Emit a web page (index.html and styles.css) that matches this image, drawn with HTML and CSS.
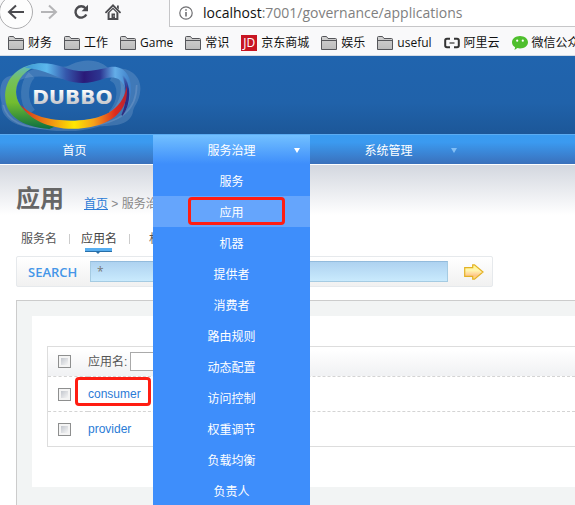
FILE: index.html
```html
<!DOCTYPE html>
<html lang="zh-CN">
<head>
<meta charset="utf-8">
<title>Dubbo 应用</title>
<link rel="stylesheet" href="styles.css">
</head>
<body>
<svg class="defs" width="0" height="0" aria-hidden="true">
  <linearGradient id="folder-fill" x1="0" y1="0" x2="0" y2="1"><stop offset="0" stop-color="#d2d2d2"/><stop offset="1" stop-color="#bcbcbc"/></linearGradient>
  <symbol id="folder" viewBox="0 0 16 14">
    <path d="M.5 13.500V1.500Q.5 .5 1.500 .5H5.500L7 2.500H14.500Q15.500 2.500 15.500 3.500V13.500Z" fill="url(#folder-fill)" stroke="#55565a"/>
    <path d="M1 4.500H15" stroke="#55565a"/>
  </symbol>
</svg>

<div class="browser">
  <div class="toolbar">
    <button class="back" aria-label="后退"><svg width="18" height="16" viewBox="0 0 18 16"><path d="M9 1.500 2 8l7 6.500M2 8h15" fill="none" stroke="#4b4b4f" stroke-width="2"/></svg></button>
    <button class="tool" aria-label="前进"><svg width="18" height="16" viewBox="0 0 18 16"><path d="M9 1.500 16 8l-7 6.500M16 8H1" fill="none" stroke="#b5b5b7" stroke-width="2"/></svg></button>
    <button class="tool" aria-label="刷新"><svg width="16" height="16" viewBox="0 0 16 16"><path d="M12.500 4.200A5.700 5.700 0 1 0 13.300 10.500" fill="none" stroke="#4b4b4f" stroke-width="2.400"/><path d="M15 .8V7.200H8.600Z" fill="#4b4b4f"/></svg></button>
    <button class="tool home" aria-label="主页"><svg width="16" height="16" viewBox="0 0 16 16"><path d="M1 8.300 8 1.300l7 7" fill="none" stroke="#4b4b4f" stroke-width="1.800" stroke-linecap="round"/><path d="M12 1.500h1.800v4L12 3.700ZM2.600 8.800 8 3.500l5.400 5.300V16H2.600Z" fill="#4b4b4f"/><path d="M4.600 8.500 8 5.200l3.400 3.300V14H10V9.500H6.500V14H4.600Z" fill="#f9f9fa"/><path d="M8.400 11.500h1v1h-1Z" fill="#f9f9fa"/></svg></button>
    <div class="address">
      <svg width="14" height="14" viewBox="0 0 14 14"><circle cx="7" cy="7" r="6.200" fill="none" stroke="#6f6f72" stroke-width="1.200"/><path d="M7 6v4.500M7 3.200v1.500" stroke="#6f6f72" stroke-width="1.600"/></svg>
      <span><b>localhost</b>:7001/governance/applications</span>
    </div>
  </div>
  <nav class="bookmarks" aria-label="书签">
    <a href="#"><svg width="16" height="14"><use href="#folder"/></svg>财务</a>
    <a href="#"><svg width="16" height="14"><use href="#folder"/></svg>工作</a>
    <a href="#"><svg width="16" height="14"><use href="#folder"/></svg>Game</a>
    <a href="#"><svg width="16" height="14"><use href="#folder"/></svg>常识</a>
    <a href="#"><span class="jd">JD</span>京东商城</a>
    <a href="#"><svg width="16" height="14"><use href="#folder"/></svg>娱乐</a>
    <a href="#"><svg width="16" height="14"><use href="#folder"/></svg>useful</a>
    <a href="#"><svg width="16" height="12" viewBox="0 0 16 12"><path d="M6 1.800H3Q1.200 1.800 1.200 3.500v5Q1.200 10.200 3 10.200h3M10 1.800h3q1.800 0 1.800 1.700v5q0 1.700-1.800 1.700h-3" fill="none" stroke="#333" stroke-width="2"/><path d="M5.500 6h5" stroke="#333" stroke-width="1.200"/></svg>阿里云</a>
    <a href="#"><svg width="16" height="14" viewBox="0 0 16 14"><path d="M8 0c4.500 0 8 2.800 8 6.300s-3.500 6.200-8 6.200q-1.400 0-2.600-.4L2.500 14l.6-2.700C1.200 10.200 0 8.400 0 6.300 0 2.800 3.500 0 8 0Z" fill="#4fbf2d"/><circle cx="5.200" cy="4.700" r="1.100" fill="#fff"/><circle cx="10.800" cy="4.700" r="1.100" fill="#fff"/></svg>微信公众</a>
  </nav>
</div>

<header class="banner">
  <svg class="logo" width="145" height="75" viewBox="0 3 435 225" role="img" aria-label="DUBBO">
    <defs>
      <linearGradient id="g-top" x1="70" y1="0" x2="390" y2="0" gradientUnits="userSpaceOnUse"><stop offset="0" stop-color="#3a96cf"/><stop offset=".22" stop-color="#5cb8ed"/><stop offset=".4" stop-color="#3558ac"/><stop offset=".57" stop-color="#2a1a78"/><stop offset=".72" stop-color="#2c3591"/><stop offset=".86" stop-color="#64aee8"/><stop offset="1" stop-color="#3f80c9"/></linearGradient>
      <linearGradient id="g-edge" x1="0" y1="60" x2="0" y2="180" gradientUnits="userSpaceOnUse"><stop offset="0" stop-color="#2a2a86" stop-opacity="0"/><stop offset=".4" stop-color="#2a2a86"/><stop offset="1" stop-color="#2f2d80"/></linearGradient>
      <linearGradient id="g-left" x1="0" y1="25" x2="0" y2="220" gradientUnits="userSpaceOnUse"><stop offset="0" stop-color="#5db7cf"/><stop offset=".25" stop-color="#75c15c"/><stop offset=".6" stop-color="#73bd2f"/><stop offset="1" stop-color="#0e7141"/></linearGradient>
      <linearGradient id="g-bottom" x1="60" y1="0" x2="385" y2="0" gradientUnits="userSpaceOnUse"><stop offset="0" stop-color="#cf2d16"/><stop offset=".25" stop-color="#ee8416"/><stop offset=".5" stop-color="#fee800"/><stop offset=".68" stop-color="#f5a21a"/><stop offset=".88" stop-color="#dd2b1e"/><stop offset="1" stop-color="#b32134"/></linearGradient>
      <linearGradient id="g-word" x1="0" y1="0" x2="0" y2="1"><stop offset=".2" stop-color="#fff"/><stop offset=".8" stop-color="#c4c6cb"/></linearGradient>
    </defs>
    <path d="M5 85C20 50 50 70 80 52C135 20 185 48 215 28C265 5 310 20 330 45C380 28 425 60 421 105C418 145 400 150 398 175C385 215 335 212 300 214C225 238 155 228 105 220C35 215 0 180 5 145C-2 115 0 100 5 85ZM60 75C35 115 55 155 88 178C160 204 270 203 325 175C360 150 372 100 355 66C320 50 295 80 245 78C180 74 120 52 60 75Z" fill="#a8c2df" fill-opacity=".24" fill-rule="evenodd"/>
    <path d="M95 60C72 85 65 135 95 172M335 66C375 85 365 145 335 178" fill="none" stroke="#a8cae0" stroke-width="24" stroke-opacity=".2"/>
    <path d="M410 90C410 160 370 205 250 215M10 150C20 200 75 220 145 220" fill="none" stroke="#a8bddd" stroke-width="5" stroke-opacity=".25"/>
    <path d="M128 25C60 25 10 70 16 132C20 180 60 215 148 222L175 210C105 207 48 160 48 110C48 75 75 43 128 25Z" fill="url(#g-left)"/>
    <path d="M75 38C110 18 150 24 190 36C240 58 290 46 330 36C370 30 394 60 393 103C392 140 381 165 366 181C382 145 381 115 373 94C360 65 338 65 316 70C270 87 235 88 198 76C150 56 120 42 75 38Z" fill="url(#g-top)"/>
    <path d="M368 60C392 90 392 145 366 181C382 145 384 105 368 60Z" fill="url(#g-edge)" stroke="url(#g-edge)" stroke-width="4"/>
    <path d="M62 150C105 190 160 197 225 197C300 195 368 170 380 94C389 170 330 215 235 221C155 226 88 195 62 150Z" fill="url(#g-bottom)"/>
    <text x="217" y="147" class="wordmark" text-anchor="middle" fill="url(#g-word)">DUBBO</text>
  </svg>
</header>

<nav class="mainnav" aria-label="主导航">
  <ul>
    <li class="first"><a href="#">首页</a></li>
    <li class="open"><a href="#">服务治理</a><span class="caret"></span>
      <ul class="menu">
        <li><a href="#">服务</a></li>
        <li class="current"><a href="#">应用</a><span class="mark mark-menu"></span></li>
        <li><a href="#">机器</a></li>
        <li><a href="#">提供者</a></li>
        <li><a href="#">消费者</a></li>
        <li><a href="#">路由规则</a></li>
        <li><a href="#">动态配置</a></li>
        <li><a href="#">访问控制</a></li>
        <li><a href="#">权重调节</a></li>
        <li><a href="#">负载均衡</a></li>
        <li><a href="#">负责人</a></li>
      </ul>
    </li>
    <li><a href="#">系统管理</a><span class="caret dim"></span></li>
  </ul>
</nav>

<main>
  <div class="heading">
    <h1>应用</h1>
    <div class="crumbs"><a href="#">首页</a> &gt; 服务治理 &gt; 应用</div>
  </div>
  <div class="tabs">
    <a href="#">服务名</a><i></i><a href="#" class="selected">应用名</a><i></i><a href="#" class="machine">机器名</a>
  </div>
  <form class="search">
    <label for="keyword">SEARCH</label>
    <input id="keyword" type="text" value="*">
    <button type="button" aria-label="搜索"><svg width="20" height="16" viewBox="0 0 20 16"><defs><linearGradient id="g-arrow" x1="0" y1="0" x2="0" y2="1"><stop offset="0" stop-color="#fff68e"/><stop offset=".4" stop-color="#fff5b0"/><stop offset=".75" stop-color="#ffc78c"/><stop offset="1" stop-color="#ffe070"/></linearGradient></defs><path d="M.7 3.700H8.700V.9H10.500L19 8l-8.500 7.100H8.700V12.300H.7Z" fill="url(#g-arrow)" stroke="#e3b224" stroke-width="1.200"/></svg></button>
  </form>
  <section class="panel">
    <div class="sheet">
      <table>
        <thead>
          <tr><th class="pick"><input type="checkbox" aria-label="全选"></th><th><div class="filter"><label for="appname">应用名:</label><input id="appname" type="text"></div></th></tr>
        </thead>
        <tbody>
          <tr><td class="pick"><input type="checkbox" aria-label="consumer"></td><td><span class="marked"><a href="#">consumer</a><span class="mark mark-row"></span></span></td></tr>
          <tr><td class="pick"><input type="checkbox" aria-label="provider"></td><td><a href="#">provider</a></td></tr>
        </tbody>
      </table>
    </div>
  </section>
</main>
</body>
</html>
```
FILE: styles.css
```css
* { box-sizing: border-box; }
html { height: 100%; overflow: hidden; }
body {
  margin: 0;
  min-height: 100%;
  background: #fff;
  color: #555;
  font: 12px/18px "Liberation Sans", "Noto Sans CJK SC", sans-serif;
}
a { color: inherit; text-decoration: none; }
ul { margin: 0; padding: 0; list-style: none; }
button { padding: 0; border: 0; background: none; display: flex; align-items: center; justify-content: center; }
svg { display: block; flex: none; }
.defs { position: absolute; }

/* browser chrome */
.browser {
  height: 56px;
  background: #f9f9fa;
  border-bottom: 1px solid #d5dce5;
  overflow: hidden;
  font-family: "Open Sans", "Noto Sans CJK SC", sans-serif;
  color: #111;
}
.toolbar { display: flex; align-items: center; height: 27px; }
.back {
  flex: none;
  width: 34px;
  height: 34px;
  margin-left: -1px;
  border: 1px solid #adadaf;
  border-radius: 50%;
  background: #fdfdfd;
}
.toolbar .back, .toolbar .tool { margin-top: -3px; }
.tool { flex: none; width: 32px; height: 32px; }
.home { margin-right: 40px; }
.address {
  flex: 1;
  display: flex;
  align-items: center;
  gap: 10px;
  height: 27px;
  padding: 0 9px;
  border: 1px solid #c6c6c8;
  border-top: 0;
  background: #fff;
  color: #808080;
  font-size: 14px;
  white-space: nowrap;
  margin-right: -4px;
}
.address b { color: #111; font-weight: 400; }
.bookmarks { display: flex; gap: 12px; padding: 7px 8px; white-space: nowrap; }
.bookmarks a { display: flex; flex: none; align-items: center; gap: 4px; }
.jd {
  width: 16px;
  height: 16px;
  background: #c81623;
  color: #fff;
  font: 12px/16px "Open Sans", sans-serif;
  text-align: center;
}

/* banner */
.banner { height: 78px; background: linear-gradient(#2064ae, #2062aa 60%, #1c5798); }
.wordmark { font: 700 60px "DejaVu Sans", sans-serif; }

/* navigation */
.mainnav { height: 31px; border-top: 1px solid #5bacf2; border-bottom: 1px solid #fff; background: linear-gradient(#3a9cf0, #3b9af0 25%, #3a70bb); }
.mainnav > ul { display: flex; height: 29px; }
.mainnav > ul > li {
  position: relative;
  width: 157px;
  color: #fff;
  text-align: center;
  line-height: 32px;
}
.mainnav > ul > .first { width: 153px; padding-right: 4px; }
.mainnav > ul > .open { background: linear-gradient(#72c0ff, #3e8efb); }
.caret {
  position: absolute;
  right: 10px;
  top: 13px;
  border: 3px solid transparent;
  border-top: 5px solid #fff;
  border-bottom: 0;
}
.caret.dim { border-top-color: #83bff5; }
.menu { position: absolute; z-index: 2; left: 0; right: 0; top: 29px; padding-top: 1px; background: #3e8efb; }
.menu li { position: relative; height: 31px; line-height: 34px; }
.menu .current { background: #65a5fc; }

.mark { position: absolute; border: 3px solid #ff1d12; border-radius: 4px; }
.mark-menu { left: 35px; right: 25px; top: 1px; bottom: 2px; }
.marked { position: relative; display: inline-block; }
.mark-row { left: -13px; right: -10px; top: -8px; bottom: -3px; }

/* page */
main { padding: 16px 0 0 16px; background: linear-gradient(#d3d7df, #fff 50px); }
.heading { display: flex; align-items: flex-end; gap: 20px; height: 36px; }
h1 { margin: 0; color: #666; font-size: 24px; line-height: 36px; }
.crumbs { color: #888; line-height: 24px; padding-bottom: 1px; }
.crumbs a { color: #2a7bd6; text-decoration: underline; }
.tabs { display: flex; align-items: center; gap: 12px; height: 39px; padding: 4px 5px 0; }
.tabs i { width: 1px; height: 10px; margin-right: -1px; background: #ccc; }
.tabs .machine { margin-left: 8px; }
.selected { position: relative; color: #444; }
.selected::before {
  content: "";
  position: absolute;
  left: 4px;
  right: 5px;
  bottom: -4px;
  height: 3px;
  background: #57aef0;
  border-bottom: 1px solid #286fa8;
}
.selected::after {
  content: "";
  position: absolute;
  left: 15px;
  bottom: -6px;
  border: 2px solid transparent;
  border-top-color: #286fa8;
  border-bottom: 0;
}
.search {
  display: flex;
  align-items: center;
  width: 477px;
  height: 31px;
  padding-left: 11px;
  border: 1px solid #e6e9ec;
  border-radius: 2px;
  background: linear-gradient(#fff, #f1f1f1);
}
.search label { width: 62px; color: #4596e8; font: 600 13px/18px "Open Sans", sans-serif; }
.search input {
  flex: 1;
  min-width: 0;
  height: 21px;
  padding: 0 6px;
  border: 1px solid #a5cbe2;
  border-top-color: #93bbdc;
  background: linear-gradient(#aed2f0, #c9eafd);
  color: #777;
  font: 12px/18px "Open Sans", sans-serif;
}
.search button { width: 20px; margin: 0 8px 0 16px; }
.panel { margin-top: 13px; padding: 15px 0 40px 15px; border: 1px solid #ccc; border-right: 0; background: #f2f4f4; }
.sheet { padding: 30px 0 40px 15px; background: #fff; }
table { width: 100%; border: 1px solid #ddd; border-right: 0; border-spacing: 0; }
th { height: 30px; padding: 0; font-weight: 400; text-align: left; background: linear-gradient(#fff 10%, #f0f1f3); }
td { height: 35px; padding: 0; }
tbody tr:last-child td { height: 34px; }
th, tbody tr:first-child td { border-bottom: 1px dashed #d4d4d4; }
td a { color: #2a7bd6; }
.pick { width: 40px; padding-left: 10px; }
input[type="checkbox"] {
  appearance: none;
  display: block;
  width: 13px;
  height: 13px;
  margin: 0;
  border: 1px solid #8e8f8f;
  background: linear-gradient(135deg, #c3c7ce, #f5f5f5) content-box, #f4f4f4;
  padding: 2px;
}
.filter { display: flex; align-items: center; gap: 3px; }
.filter input { width: 120px; height: 19px; border: 1px solid #aaa; background: #fff; }
```
